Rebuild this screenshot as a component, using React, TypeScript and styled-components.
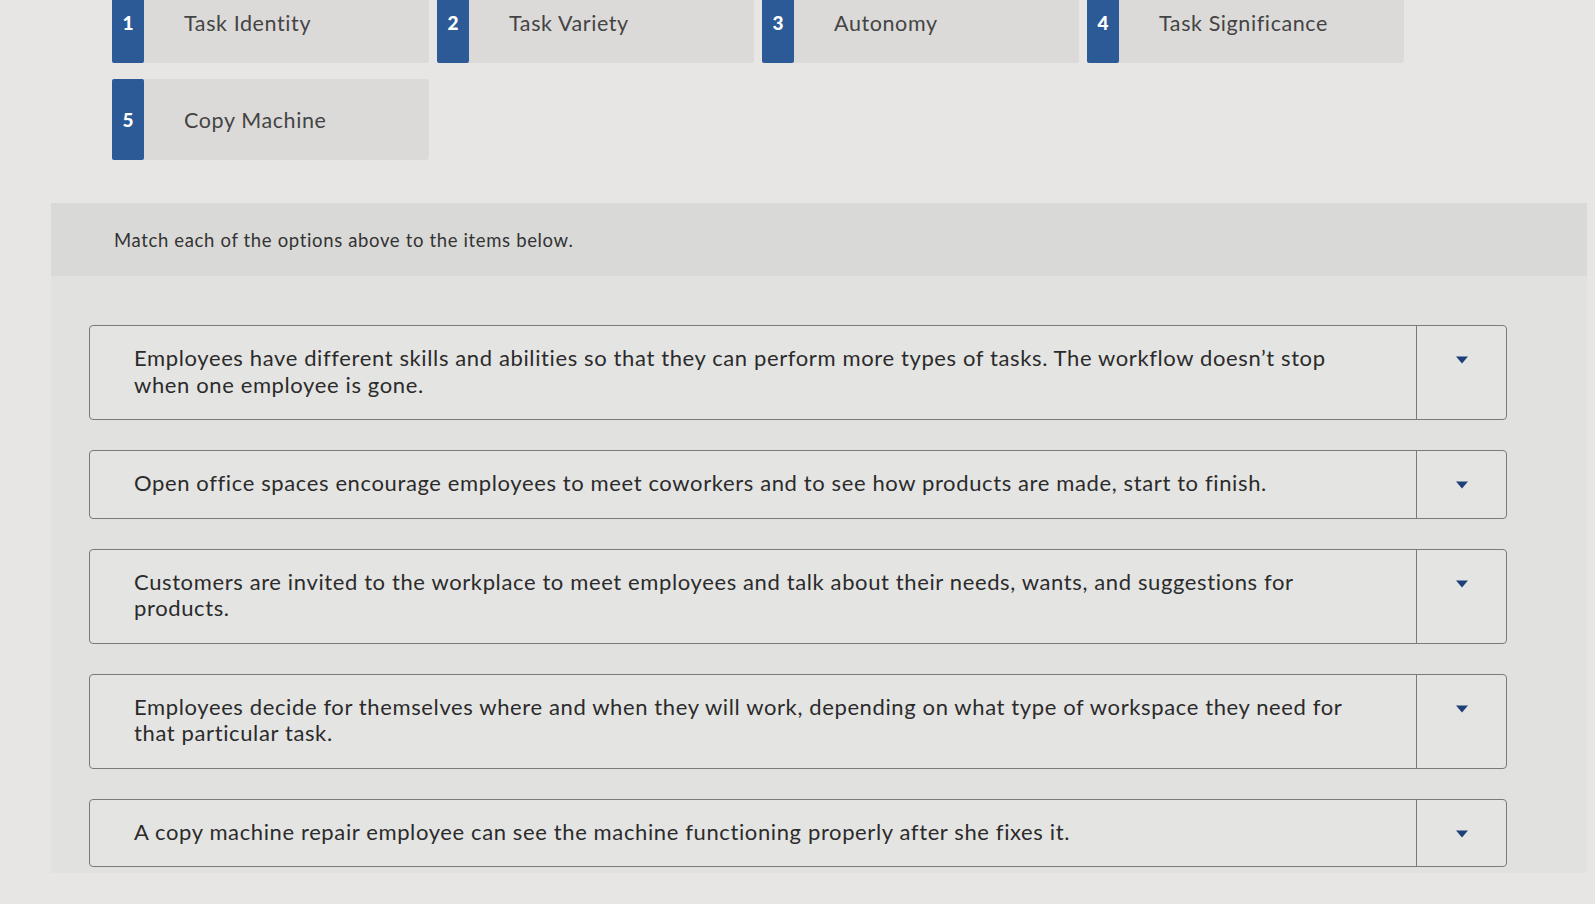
import React from "react";
import styled, { createGlobalStyle } from "styled-components";

const GlobalStyle = createGlobalStyle`
  html, body {
    margin: 0;
    padding: 0;
    background: #e7e6e4;
    font-family: "Lato", "Liberation Sans", sans-serif;
    overflow: hidden;
  }
`;

const Page = styled.div`
  width: 1595px;
  height: 904px;
  background: #e7e6e4;
`;

const Options = styled.div`
  display: grid;
  grid-template-columns: repeat(4, 317px);
  grid-auto-rows: 81px;
  column-gap: 8px;
  row-gap: 16px;
  margin-top: -18px;
  padding-left: 112px;
`;

const Option = styled.div`
  display: flex;
  align-items: stretch;
  background: #dbdad8;
  border-radius: 3px;
`;

const Badge = styled.div`
  width: 32px;
  flex: none;
  display: flex;
  align-items: center;
  justify-content: center;
  background: #2b5a97;
  color: #fff;
  font-weight: 900;
  font-size: 19px;
  border-radius: 2px;
`;

const OptionLabel = styled.div`
  display: flex;
  align-items: center;
  padding-left: 40px;
  font-size: 21.5px;
  letter-spacing: 0.6px;
  color: #444;
`;

const Panel = styled.section`
  margin: 43px 0 0 51px;
  width: 1536px;
  background: #e1e1e0;
`;

const Prompt = styled.div`
  height: 73px;
  display: flex;
  align-items: center;
  padding-left: 63px;
  background: #d9d9d8;
  font-size: 18.5px;
  letter-spacing: 0.65px;
  color: #333;
`;

const Items = styled.div`
  display: flex;
  flex-direction: column;
  gap: 30px;
  padding: 49px 80px 6px 38px;
`;

const Item = styled.div`
  display: flex;
  border: 1.5px solid #7a7a7a;
  border-radius: 4px;
  background: #e4e4e3;
`;

const ItemText = styled.div`
  flex: 1;
  padding: 19px 20px 21px 44px;
  font-size: 22px;
  line-height: 26.5px;
  letter-spacing: 0.62px;
  color: #2b2b2b;
`;

const Line = styled.span`
  display: block;
  white-space: nowrap;
`;

const Select = styled.div`
  width: 89px;
  flex: none;
  border-left: 1.5px solid #7a7a7a;
  display: flex;
  justify-content: center;
  padding-top: 30px;
`;

const Caret = () => (
  <svg width="14" height="8" viewBox="0 0 14 8">
    <path d="M1 0.5h12L7 7.5z" fill="#1f3f78" />
  </svg>
);

const options = [
  "Task Identity",
  "Task Variety",
  "Autonomy",
  "Task Significance",
  "Copy Machine",
];

const items = [
  [
    "Employees have different skills and abilities so that they can perform more types of tasks. The workflow doesn\u2019t stop",
    "when one employee is gone.",
  ],
  [
    "Open office spaces encourage employees to meet coworkers and to see how products are made, start to finish.",
  ],
  [
    "Customers are invited to the workplace to meet employees and talk about their needs, wants, and suggestions for",
    "products.",
  ],
  [
    "Employees decide for themselves where and when they will work, depending on what type of workspace they need for",
    "that particular task.",
  ],
  [
    "A copy machine repair employee can see the machine functioning properly after she fixes it.",
  ],
];

export default function App() {
  return (
    <Page>
      <GlobalStyle />
      <Options>
        {options.map((label, i) => (
          <Option key={label}>
            <Badge>{i + 1}</Badge>
            <OptionLabel>{label}</OptionLabel>
          </Option>
        ))}
      </Options>
      <Panel>
        <Prompt>Match each of the options above to the items below.</Prompt>
        <Items>
          {items.map((lines) => (
            <Item key={lines[0]}>
              <ItemText>
                {lines.map((line) => (
                  <Line key={line}>{line}</Line>
                ))}
              </ItemText>
              <Select>
                <Caret />
              </Select>
            </Item>
          ))}
        </Items>
      </Panel>
    </Page>
  );
}
